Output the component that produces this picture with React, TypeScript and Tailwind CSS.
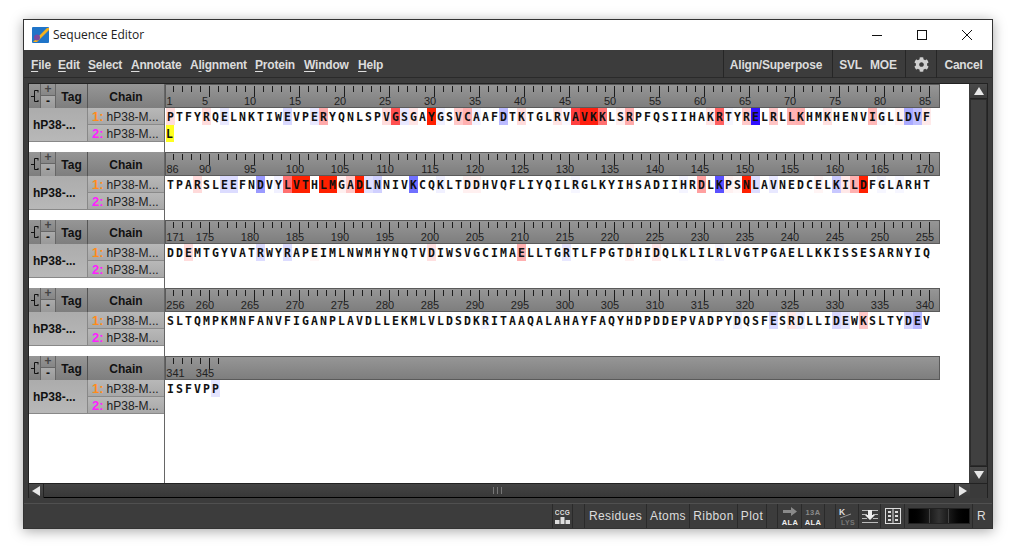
import React from 'react';
import { FaCog } from 'react-icons/fa';

type Block = { start: number; seq: string; marks: Record<number, string>; extra?: string };

const blocks: Block[] = [
  {
    start: 1,
    seq: 'PTFYRQELNKTIWEVPERYQNLSPVGSGAYGSVCAAFDTKTGLRVAVKKLSRPFQSIIHAKRTYRELRLLKHMKHENVIGLLDVF',
    extra: 'L',
    marks: {
      0: '#ffdcdc', 4: '#ffdcdc', 6: '#e8e8ff', 13: '#d8d8ff', 16: '#e8e8ff', 17: '#ffaaaa', 24: '#ffdcdc', 25: '#ff5050',
      26: '#e8e8ff', 27: '#ffe4e4', 29: '#ff2000', 30: '#f0f0ff', 32: '#ffc8c8', 33: '#ffb0b0', 34: '#f2f2ff', 37: '#bbbbff',
      39: '#ffdcdc', 43: '#ffe4e4', 44: '#f8f8ff', 45: '#ff4040', 46: '#ff2010', 47: '#ff2010', 48: '#ff7070', 50: '#ffeeee',
      51: '#ffaaaa', 60: '#ffe4e4', 61: '#ff6060', 62: '#f6f6ff', 64: '#ffc8c8', 65: '#3010ff', 67: '#ffc4c4', 69: '#ffb4b4',
      70: '#ffb0b0', 73: '#ffe0e0', 78: '#ffb8b8', 79: '#f8f8ff', 81: '#fff0f0', 82: '#aaaaff', 83: '#c0c0ff', 84: '#ffeaea',
    },
  },
  {
    start: 86,
    seq: 'TPARSLEEFNDVYLVTHLMGADLNNIVKCQKLTDDHVQFLIYQILRGLKYIHSADIIHRDLKPSNLAVNEDCELKILDFGLARHT',
    marks: {
      3: '#ffdada', 6: '#dcdcff', 7: '#dcdcff', 10: '#9a9aff', 12: '#f0f0ff', 13: '#ff7070', 14: '#ff2000', 15: '#ff2000',
      17: '#ff2000', 18: '#ff2000', 19: '#fff0f0', 20: '#ffc8c8', 21: '#ff2000', 22: '#e0e0ff', 23: '#d0d0ff', 27: '#7070ff',
      30: '#f0f0ff', 33: '#fff0f0', 34: '#fff0f0', 45: '#f6f6ff', 57: '#f4f4ff', 59: '#ffa0a0', 61: '#5a50ff', 62: '#fff0f0',
      63: '#fff8f8', 64: '#ff2000', 65: '#dcdcff', 67: '#e8e8ff', 72: '#fff4f4', 74: '#c8c8ff', 75: '#ffe8e8', 76: '#ffb0b0',
      77: '#ff2000', 79: '#f6f6ff', 81: '#f6f6ff',
    },
  },
  {
    start: 171,
    seq: 'DDEMTGYVATRWYRAPEIMLNWMHYNQTVDIWSVGCIMAELLTGRTLFPGTDHIDQLKLILRLVGTPGAELLKKISSESARNYIQ',
    marks: {
      2: '#ffdcdc', 10: '#dcdcff', 13: '#dcdcff', 16: '#fff6f6', 29: '#ffe0e0', 39: '#ffb0b0', 44: '#e8e8ff', 51: '#fff0f0',
      54: '#ffe8e8', 57: '#f8f8ff', 61: '#f4f4ff',
    },
  },
  {
    start: 256,
    seq: 'SLTQMPKMNFANVFIGANPLAVDLLEKMLVLDSDKRITAAQALAHAYFAQYHDPDDEPVADPYDQSFESRDLLIDEWKSLTYDEV',
    marks: {
      6: '#fafaff', 35: '#f4f4ff', 56: '#fff8f8', 63: '#eeeeff', 67: '#d8d8ff', 69: '#ffe8e8', 70: '#eeeeff', 74: '#d8d8ff',
      75: '#e4e4ff', 77: '#ffc8c8', 82: '#d4d4ff', 83: '#b8b8ff',
    },
  },
  { start: 341, seq: 'ISFVPP', marks: { 5: '#e4e4ff' } },
];

const Ruler = ({ start, count }: { start: number; count: number }) => {
  const ticks = Array.from({ length: count }, (_, k) => k);
  return (
    <div className="h-[24px] w-[775px] border border-[#5a5a5a] bg-gradient-to-b from-[#969696] to-[#7e7e7e]">
      <svg width="773" height="22" className="block">
        {ticks.map((k) => {
          const major = (start + k) % 5 === 0;
          return <line key={k} x1={7.5 + 9 * k} x2={7.5 + 9 * k} y1={1} y2={major ? 12 : 7} stroke="#1c1c1c" />;
        })}
        {ticks
          .filter((k) => k === 0 || (start + k) % 5 === 0)
          .map((k) => {
            const label = String(start + k);
            const x = Math.max(3 + 9 * k, label.length * 3 + 0.5);
            return (
              <text key={k} x={x} y={20} textAnchor="middle" fontSize="11" fill="#222" fontFamily="'Liberation Sans', sans-serif">
                {label}
              </text>
            );
          })}
      </svg>
    </div>
  );
};

const Residues = ({ block }: { block: Block }) => (
  <div className="flex h-[17px] pl-px">
    {block.seq.split('').map((c, i) => (
      <span
        key={i}
        className="w-[9px] h-[17px] shrink-0 text-center text-[11.5px] leading-[18px] font-bold text-[#111] font-['DejaVu_Sans_Mono',monospace]"
        style={{ backgroundColor: block.marks[i] }}
      >
        {c}
      </span>
    ))}
  </div>
);

const TreeIcon = () => (
  <svg width="10" height="14" viewBox="0 0 10 14" fill="none" stroke="#111">
    <path d="M8 1.5H4.5V12.5H8M1 7.5H4.5M8 1V3.5M8 11V13" />
  </svg>
);

const BlockHead = () => (
  <div className="flex h-[24px] text-[12px] font-bold text-[#111]">
    <div className="flex w-[12px] items-center justify-center border-r border-[#666] bg-gradient-to-b from-[#969696] to-[#7e7e7e]">
      <TreeIcon />
    </div>
    <div className="flex w-[15px] flex-col border-r border-[#666] text-center text-[12px] leading-[11px]">
      <div className="h-[12px] border-b border-[#666] bg-gradient-to-b from-[#969696] to-[#868686] text-[#444]">+</div>
      <div className="h-[12px] bg-gradient-to-b from-[#aaa] to-[#999]">-</div>
    </div>
    <div className="flex w-[32px] items-center justify-center border-r border-[#555] bg-gradient-to-b from-[#969696] to-[#7e7e7e] pt-[2px]">Tag</div>
    <div className="flex w-[76px] items-center justify-center bg-gradient-to-b from-[#969696] to-[#7e7e7e] pt-[2px]">Chain</div>
  </div>
);

const ChainCell = ({ n, color }: { n: string; color: string }) => (
  <div className="flex h-[17px] items-center gap-[3px] border-b border-[#8a8a8a] bg-gradient-to-b from-[#b8b8b8] to-[#a8a8a8] pl-[4px] pt-[2px] text-[12px] text-[#222]">
    <span className="text-[13px] font-bold" style={{ color }}>{n}</span>
    <span>hP38-M...</span>
  </div>
);

const LeftCol = () => (
  <div className="w-[136px] shrink-0">
    <BlockHead />
    <div className="flex h-[34px]">
      <div className="flex w-[59px] items-center pl-[4px] text-[12px] font-bold text-[#111] border-r border-[#888] border-b bg-gradient-to-b from-[#acacac] to-[#b8b8b8]">
        hP38-...
      </div>
      <div className="w-[76px]">
        <ChainCell n="1:" color="#ff8c1a" />
        <ChainCell n="2:" color="#ff20ff" />
      </div>
    </div>
  </div>
);

const SeqBlock = ({ block }: { block: Block }) => (
  <div className="flex h-[68px]">
    <div className="w-[136px] shrink-0 border-r border-[#666]">
      <LeftCol />
    </div>
    <div className="min-w-0 flex-1">
      <Ruler start={block.start} count={block.seq.length} />
      <Residues block={block} />
      {block.extra && (
        <div className="pl-px">
          <span className="block h-[17px] w-[8px] bg-[#ffff20] text-[11.5px] leading-[18px] font-bold text-[#111] font-['DejaVu_Sans_Mono',monospace]">
            {block.extra}
          </span>
        </div>
      )}
    </div>
  </div>
);

const ArrowBtn = ({ d, className }: { d: string; className: string }) => (
  <div className={`flex shrink-0 items-center justify-center bg-gradient-to-b from-[#4a4a4a] to-[#3a3a3a] ${className}`}>
    <svg width="10" height="10" viewBox="0 0 10 10">
      <path d={d} fill="#e8e8e8" />
    </svg>
  </div>
);

const Menu = ({ pre, u, post, className }: { pre?: string; u: string; post: string; className: string }) => (
  <span className={className}>
    {pre}
    <span className="underline underline-offset-2">{u}</span>
    {post}
  </span>
);

const TopBtn = ({ children, className }: { children: React.ReactNode; className: string }) => (
  <div className={`flex h-[28px] items-center justify-center border-l border-[#262626] pt-[2px] ${className}`}>{children}</div>
);

const StatBtn = ({ children, className }: { children: React.ReactNode; className: string }) => (
  <div className={`flex h-[24px] items-center justify-center border-r border-[#2a2a2a] ${className}`}>{children}</div>
);

const iconText = "'Liberation Sans', sans-serif";

export default function App() {
  return (
    <div className="h-[555px] w-[1015px] overflow-hidden bg-white pl-[23px] pt-[19px] font-['Liberation_Sans',sans-serif]">
      <div className="flex h-[510px] w-[970px] flex-col border border-[#333] bg-[#3c3c3c] shadow-[0_2px_12px_rgba(0,0,0,0.35)]">
        {/* title bar */}
        <div className="flex h-[30px] shrink-0 items-center bg-white text-[#222]">
          <svg width="17" height="16" viewBox="0 0 17 16" className="ml-[8px]">
            <rect width="17" height="16" rx="1" fill="#1f74c8" />
            <path d="M1 15L15 1H17V3L5 15Z" fill="#f4b11c" />
            <circle cx="5" cy="10.5" r="3" fill="#7a4a9e" />
          </svg>
          <span className="ml-[4px] text-[12px] font-['Open_Sans',sans-serif]">Sequence Editor</span>
          <div className="ml-auto flex items-center">
            <div className="h-px w-[10px] bg-[#111]" />
            <div className="ml-[35px] h-[10px] w-[10px] border border-[#111]" />
            <svg width="10" height="10" viewBox="0 0 10 10" className="ml-[35px] mr-[20px]" stroke="#111" fill="none">
              <path d="M0 0L10 10M10 0L0 10" />
            </svg>
          </div>
        </div>

        {/* menu */}
        <div className="flex h-[28px] shrink-0 items-center border-b border-[#2a2a2a] text-[12px] font-bold tracking-[-0.2px] text-[#dcdcdc]">
          <div className="ml-[7px] mt-[2px] flex">
            <Menu u="F" post="ile" className="w-[27px]" />
            <Menu u="E" post="dit" className="w-[30px]" />
            <Menu u="S" post="elect" className="w-[43px]" />
            <Menu u="A" post="nnotate" className="w-[59px]" />
            <Menu pre="A" u="l" post="ignment" className="w-[65px]" />
            <Menu u="P" post="rotein" className="w-[49px]" />
            <Menu u="W" post="indow" className="w-[54px]" />
            <Menu u="H" post="elp" className="w-[30px]" />
          </div>
          <div className="ml-auto flex pr-[2px]">
            <TopBtn className="w-[109px] pr-[4px]">Align/Superpose</TopBtn>
            <TopBtn className="w-[73px] gap-[8px] pr-[2px]">
              <span>SVL</span>
              <span>MOE</span>
            </TopBtn>
            <TopBtn className="w-[31px]">
              <FaCog className="h-[15px] w-[15px] text-[#cfcfcf]" />
            </TopBtn>
            <TopBtn className="w-[54px]">Cancel</TopBtn>
          </div>
        </div>

        {/* editor panel */}
        <div className="mx-[4px] mt-[5px] flex h-[415px] shrink-0 flex-col border-t border-l border-r border-[#222]">
          <div className="flex min-h-0 flex-1">
            <div className="flex w-[941px] flex-col bg-white">
              {blocks.map((b) => (
                <SeqBlock key={b.start} block={b} />
              ))}
              <div className="w-[136px] flex-1 border-r border-[#666]" />
            </div>
            <div className="ml-px flex w-[17px] flex-col bg-[#3a3a3a]">
              <ArrowBtn d="M5 1L10 9H0Z" className="h-[15px] border-b border-[#222]" />
              <div className="flex-1 border border-[#2c2c2c] bg-[#404040]" />
              <ArrowBtn d="M0 1H10L5 9Z" className="h-[17px] border-t border-[#222]" />
            </div>
          </div>
          <div className="flex h-[15px] shrink-0 border-t border-[#222] bg-[#3a3a3a]">
            <ArrowBtn d="M1 5L9 0V10Z" className="w-[15px] border-r border-[#222]" />
            <div className="relative flex-1 border-b border-black bg-gradient-to-b from-[#444] to-[#383838]">
              <div className="absolute left-[449px] top-[3px] flex h-[7px] w-[9px] justify-center border-x border-[#777]">
                <div className="h-full w-px bg-[#777]" />
              </div>
            </div>
            <ArrowBtn d="M9 5L1 0V10Z" className="w-[16px] border-l border-[#222]" />
            <div className="w-[17px]" />
          </div>
        </div>

        {/* status bar */}
        <div className="mt-[5px] flex h-[25px] items-center justify-end border-t border-[#505050] pr-[2px] text-[12px] tracking-[0.4px] text-[#dcdcdc]">
          <StatBtn className="w-[21px] border-l">
            <svg width="15" height="17" viewBox="0 0 15 17">
              <text x="7.5" y="7" textAnchor="middle" fontSize="6.5" fontWeight="700" fill="#ddd" fontFamily={iconText}>CCG</text>
              <path d="M0 16V12H4.5V16ZM5.5 16V9H9.5V16ZM10.5 16V12H15V16Z" fill="#ddd" />
            </svg>
          </StatBtn>
          <div className="w-[12px] h-[24px] border-r border-[#2a2a2a]" />
          <StatBtn className="w-[62px]">Residues</StatBtn>
          <StatBtn className="w-[43px]">Atoms</StatBtn>
          <StatBtn className="w-[48px]">Ribbon</StatBtn>
          <StatBtn className="w-[29px]">Plot</StatBtn>
          <div className="w-[11px] h-[24px] border-r border-[#2a2a2a]" />
          <StatBtn className="w-[24px]">
            <svg width="18" height="19" viewBox="0 0 18 19">
              <path d="M2 3H10V0L16 4.5L10 9V6H2Z" fill="#8a8a8a" />
              <text x="9" y="18" textAnchor="middle" fontSize="7.5" fontWeight="700" fill="#eee" fontFamily={iconText}>ALA</text>
            </svg>
          </StatBtn>
          <StatBtn className="w-[23px]">
            <svg width="18" height="19" viewBox="0 0 18 19">
              <text x="9" y="8" textAnchor="middle" fontSize="7.5" fontWeight="700" fill="#8a8a8a" fontFamily={iconText}>13A</text>
              <text x="9" y="18" textAnchor="middle" fontSize="7.5" fontWeight="700" fill="#eee" fontFamily={iconText}>ALA</text>
            </svg>
          </StatBtn>
          <div className="w-[11px] h-[24px] border-r border-[#2a2a2a]" />
          <StatBtn className="w-[23px]">
            <svg width="18" height="19" viewBox="0 0 18 19">
              <text x="1" y="8" fontSize="8.5" fontWeight="700" fill="#ddd" fontFamily={iconText}>K</text>
              <path d="M2 11L13 7" stroke="#999" />
              <text x="3" y="18" fontSize="7" fontWeight="700" fill="#777" fontFamily={iconText}>LYS</text>
            </svg>
          </StatBtn>
          <StatBtn className="w-[22px]">
            <svg width="16" height="14" viewBox="0 0 16 14">
              <path d="M0 1.5H16M0 5.5H5M11 5.5H16M0 9.5H5M11 9.5H16M0 13.5H16" stroke="#bbb" />
              <path d="M6 1H10V6H13L8 11L3 6H6Z" fill="#eee" />
            </svg>
          </StatBtn>
          <StatBtn className="w-[24px]">
            <svg width="16" height="16" viewBox="0 0 16 16" fill="none">
              <rect x="0.5" y="0.5" width="15" height="15" stroke="#ddd" />
              <path d="M8 0V16" stroke="#ddd" />
              <path d="M3 4H6M3 8H6M3 12H6M10 4H13M10 8H13M10 12H13" stroke="#ddd" strokeWidth="2" />
            </svg>
          </StatBtn>
          <StatBtn className="w-[68px]">
            <div className="flex h-[16px] w-[62px] border border-[#222] bg-gradient-to-r from-black via-[#333] to-black">
              <div className="w-[21px] border-r border-[#444]" />
              <div className="w-[19px] border-r border-[#444]" />
            </div>
          </StatBtn>
          <div className="flex h-[24px] w-[17px] items-center justify-center">R</div>
        </div>
      </div>
    </div>
  );
}
